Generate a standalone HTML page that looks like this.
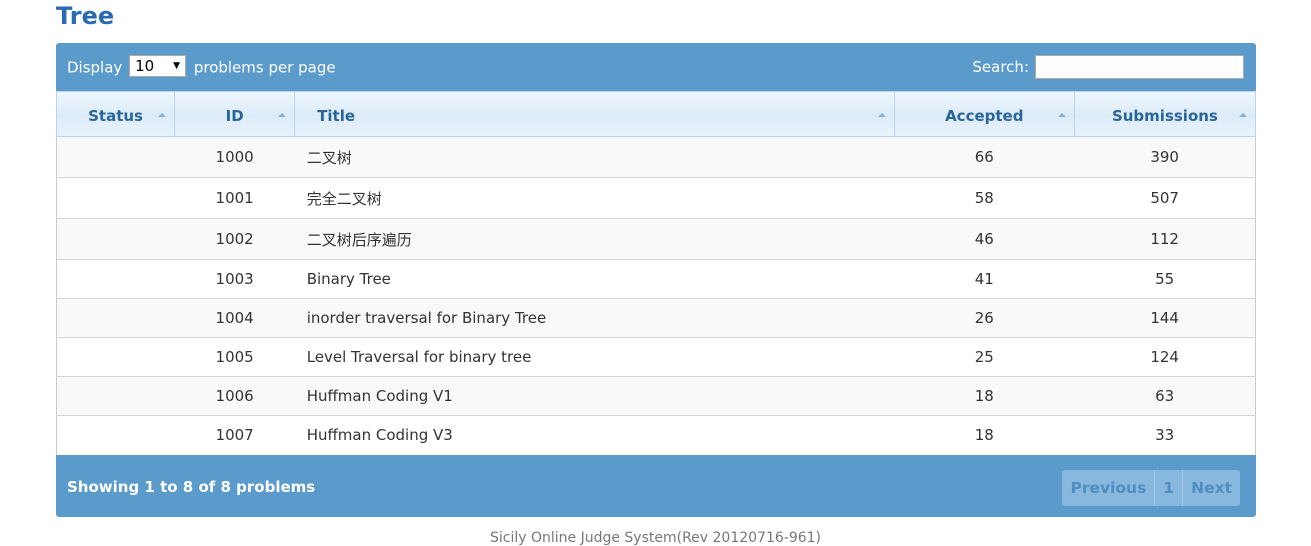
<!DOCTYPE html>
<html><head><meta charset="utf-8"><style>
body{margin:0;background:#fff;font-family:"DejaVu Sans","Liberation Sans","Noto Sans CJK SC",sans-serif;width:1311px;height:544px;overflow:hidden;position:relative}
h1{position:absolute;left:56px;top:1px;margin:0;font-size:24px;line-height:30px;color:#2a6bb0;font-weight:bold}
.wrap{position:absolute;left:56px;top:43px;width:1200px}
.top{height:48px;background:#5b9bcb;border-radius:3px 3px 0 0;color:#fff;font-size:15px;position:relative}
.top .l{position:absolute;left:11px;top:14px}
.sel{display:inline-block;width:57px;height:22px;background:#fff;color:#000;border:1px solid #aaa;vertical-align:middle;position:relative;top:-2px;font-size:15px;line-height:20px;padding-left:5px;box-sizing:border-box;margin:0 3px 0 2px}
.sel:after{content:"▼";position:absolute;right:5px;font-size:9px;top:0}
.top .r{position:absolute;right:12px;top:12px}
.top .r span{vertical-align:middle}
.in{display:inline-block;width:209px;height:24px;background:#fff;border:1px solid #aaa;vertical-align:middle;margin-left:6px;box-sizing:border-box}
table{border-collapse:collapse;width:1200px;border-left:1px solid #ccc;border-right:1px solid #ccc;box-sizing:border-box;table-layout:fixed}
tr.h{height:45px}
th{background:linear-gradient(#eef6fd,#ddecf9 50%,#e8f3fd);color:#2a6597;font-size:15px;font-weight:bold;border:1px solid #b8d3ea;position:relative;padding:3px 0 0}
th:after{content:"";position:absolute;right:8px;top:21px;border:4px solid transparent;border-bottom:4px solid #7fb0d9;border-top:0}
td{font-size:15px;color:#333;text-align:center;border-top:1px solid #d4d4d4;padding:0}
tr.a td{background:#f9f9f9}
.t{text-align:left;padding-left:12px}
.bot{height:62px;background:#5b9bcb;border-radius:0 0 3px 3px;color:#fff;font-size:15px;font-weight:bold;position:relative}
.bot .l{position:absolute;left:11px;top:23px}
.pg{position:absolute;right:16px;top:15px;height:36px;background:#89b8de;border-radius:3px;display:flex;color:#4f8cc0;font-size:15.5px;font-weight:bold;line-height:36px}
.pg span{padding:0 8px}
.pg span+span{border-left:1px solid #a9cbe8}
.foot{position:absolute;top:530px;left:0;width:1311px;text-align:center;font-size:14px;color:#777}
</style></head><body>
<h1>Tree</h1>
<div class="wrap">
<div class="top"><div class="l">Display <span class="sel">10</span> problems per page</div><div class="r"><span>Search:</span><span class="in"></span></div></div>
<table>
<colgroup><col style="width:118px"><col style="width:120px"><col style="width:599px"><col style="width:180px"><col style="width:181px"></colgroup>
<tr class="h"><th>Status</th><th>ID</th><th style="text-align:left;padding-left:22px">Title</th><th>Accepted</th><th>Submissions</th></tr>
<tr class="a" style="height:41px"><td></td><td>1000</td><td class="t">二叉树</td><td>66</td><td>390</td></tr>
<tr style="height:41px"><td></td><td>1001</td><td class="t">完全二叉树</td><td>58</td><td>507</td></tr>
<tr class="a" style="height:41px"><td></td><td>1002</td><td class="t">二叉树后序遍历</td><td>46</td><td>112</td></tr>
<tr style="height:39px"><td></td><td>1003</td><td class="t">Binary Tree</td><td>41</td><td>55</td></tr>
<tr class="a" style="height:39px"><td></td><td>1004</td><td class="t">inorder traversal for Binary Tree</td><td>26</td><td>144</td></tr>
<tr style="height:39px"><td></td><td>1005</td><td class="t">Level Traversal for binary tree</td><td>25</td><td>124</td></tr>
<tr class="a" style="height:39px"><td></td><td>1006</td><td class="t">Huffman Coding V1</td><td>18</td><td>63</td></tr>
<tr style="height:39px"><td></td><td>1007</td><td class="t">Huffman Coding V3</td><td>18</td><td>33</td></tr>
</table>
<div class="bot"><div class="l">Showing 1 to 8 of 8 problems</div><div class="pg"><span>Previous</span><span>1</span><span>Next</span></div></div>
</div>
<div class="foot">Sicily Online Judge System(Rev 20120716-961)</div>
</body></html>
